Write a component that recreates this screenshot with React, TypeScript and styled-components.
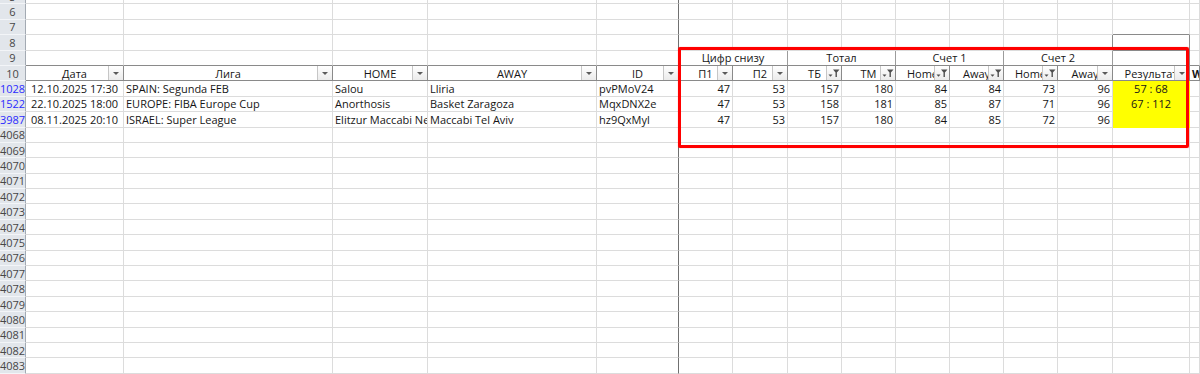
import React from 'react';
import styled, { createGlobalStyle } from 'styled-components';

const GRID = '#dcdcdc';
const DARK = '#8a8a8a';
const FREEZE = '#707070';
const YELLOW = '#ffff00';
const COLS =
  '26px 98px 209px 95px 169px 82px 54px 55px 54px 54px 54px 54px 54px 55px 77px 1fr';
const ROW_H = 15.4;
const FONT = `"Open Sans", "Liberation Sans", sans-serif`;

type Align = 'left' | 'center' | 'right';
const justify: Record<Align, string> = {
  left: 'flex-start',
  center: 'center',
  right: 'flex-end',
};

const Global = createGlobalStyle`
  html, body { margin: 0; padding: 0; background: #fff; }
  body { font-family: ${FONT}; }
`;

const Page = styled.div`
  position: relative;
  width: 1200px;
  height: 374px;
  overflow: hidden;
  background: #fff;
  font-family: ${FONT};
  font-size: 11px;
  color: #161616;
`;

const Sheet = styled.div`
  margin-top: -11px;
`;

const Row = styled.div`
  display: grid;
  grid-template-columns: ${COLS};
  height: ${ROW_H}px;
`;

const RowHead = styled.div<{ $blue?: boolean }>`
  box-sizing: border-box;
  display: flex;
  align-items: center;
  justify-content: center;
  overflow: hidden;
  white-space: nowrap;
  background: #e2e6eb;
  border-right: 1px solid #a3aab3;
  border-bottom: 1px solid #f3f5f8;
  color: ${(p) => (p.$blue ? '#2b2bff' : '#474747')};
`;

const Cell = styled.div<{
  $align?: Align;
  $fill?: string;
  $right?: string;
  $bottom?: string;
  $span?: number;
}>`
  box-sizing: border-box;
  display: flex;
  align-items: center;
  justify-content: ${(p) => justify[p.$align ?? 'left']};
  padding: 0 2px;
  overflow: hidden;
  white-space: nowrap;
  background: ${(p) => p.$fill ?? 'transparent'};
  border-right: 1px solid ${(p) => p.$right ?? GRID};
  border-bottom: 1px solid ${(p) => p.$bottom ?? GRID};
  ${(p) => (p.$span ? `grid-column: span ${p.$span};` : '')}
`;

const HeadCell = styled.div<{ $align?: Align; $bold?: boolean }>`
  position: relative;
  box-sizing: border-box;
  display: flex;
  align-items: center;
  justify-content: ${(p) => justify[p.$align ?? 'center']};
  padding: 0 2px;
  overflow: hidden;
  white-space: nowrap;
  font-weight: ${(p) => (p.$bold ? 700 : 400)};
  border-right: 1px solid ${DARK};
  border-bottom: 1px solid ${DARK};
`;

const FilterBtn = styled.span`
  position: absolute;
  top: 0;
  right: 0;
  bottom: 0;
  width: 15px;
  box-sizing: border-box;
  background: linear-gradient(#ffffff, #ebebeb);
  border-left: 1px solid #c6c6c6;
  display: flex;
  align-items: center;
  justify-content: center;
`;

const Arrow = styled.span`
  width: 0;
  height: 0;
  border-left: 3px solid transparent;
  border-right: 3px solid transparent;
  border-top: 3px solid #5a5a5a;
`;

const Highlight = styled.div`
  position: absolute;
  left: 678px;
  top: 47px;
  width: 511px;
  height: 101px;
  box-sizing: border-box;
  border: 3px solid #ff0000;
  border-radius: 2px;
  box-shadow: 0 0 1px rgba(255, 0, 0, 0.6);
  pointer-events: none;
`;

const Funnel = () => (
  <svg width="12" height="10" viewBox="0 0 12 10">
    <path d="M0.5 6.5h4l-2 2.2z" fill="#4f4f4f" />
    <path d="M5 1.5h6.5l-2.6 3v4.5h-1.4v-4.5z" fill="#4f4f4f" />
  </svg>
);

type Col = {
  head: string;
  align: Align;
  filter: 'plain' | 'funnel';
};

const columns: Col[] = [
  { head: 'Дата', align: 'center', filter: 'plain' },
  { head: 'Лига', align: 'left', filter: 'plain' },
  { head: 'HOME', align: 'left', filter: 'plain' },
  { head: 'AWAY', align: 'left', filter: 'plain' },
  { head: 'ID', align: 'left', filter: 'plain' },
  { head: 'П1', align: 'right', filter: 'plain' },
  { head: 'П2', align: 'right', filter: 'plain' },
  { head: 'ТБ', align: 'right', filter: 'funnel' },
  { head: 'ТМ', align: 'right', filter: 'funnel' },
  { head: 'Home', align: 'right', filter: 'funnel' },
  { head: 'Away', align: 'right', filter: 'funnel' },
  { head: 'Home', align: 'right', filter: 'funnel' },
  { head: 'Away', align: 'right', filter: 'plain' },
  { head: 'Результат', align: 'center', filter: 'plain' },
];

const ID_COL = 4;
const RES_COL = 13;

const data: { row: string; values: string[] }[] = [
  {
    row: '1028',
    values: ['12.10.2025 17:30', 'SPAIN: Segunda FEB', 'Salou', 'Lliria', 'pvPMoV24', '47', '53', '157', '180', '84', '84', '73', '96', '57 : 68'],
  },
  {
    row: '1522',
    values: ['22.10.2025 18:00', 'EUROPE: FIBA Europe Cup', 'Anorthosis', 'Basket Zaragoza', 'MqxDNX2e', '47', '53', '158', '181', '85', '87', '71', '96', '67 : 112'],
  },
  {
    row: '3987',
    values: ['08.11.2025 20:10', 'ISRAEL: Super League', 'Elitzur Maccabi Netanya', 'Maccabi Tel Aviv', 'hz9QxMyl', '47', '53', '157', '180', '84', '85', '72', '96', ''],
  },
];

const groups = ['Цифр снизу', 'Тотал', 'Счет 1', 'Счет 2'];

function BlankRow({ label, kind }: { label: string; kind?: 'aboveBox' | 'box' }) {
  return (
    <Row>
      <RowHead>{label}</RowHead>
      {columns.map((_, i) => {
        let right: string | undefined = i === ID_COL ? FREEZE : undefined;
        let bottom: string | undefined;
        if (kind === 'aboveBox' && i === RES_COL) bottom = DARK;
        if (kind === 'box' && (i === RES_COL - 1 || i === RES_COL)) right = DARK;
        if (kind === 'box' && i === RES_COL) bottom = DARK;
        return <Cell key={i} $right={right} $bottom={bottom} />;
      })}
      <Cell />
    </Row>
  );
}

function GroupRow() {
  return (
    <Row>
      <RowHead>9</RowHead>
      {columns.slice(0, 5).map((_, i) => (
        <Cell key={i} $bottom={DARK} $right={i === ID_COL ? FREEZE : undefined} />
      ))}
      {groups.map((g) => (
        <Cell key={g} $span={2} $align="center" $right="#9c9c9c" $bottom={DARK}>
          {g}
        </Cell>
      ))}
      <Cell $right={DARK} $bottom={DARK} />
      <Cell $bottom={DARK} />
    </Row>
  );
}

function HeaderRow() {
  return (
    <Row>
      <RowHead>10</RowHead>
      {columns.map((c, i) => (
        <HeadCell key={i}>
          {c.head}
          <FilterBtn>{c.filter === 'funnel' ? <Funnel /> : <Arrow />}</FilterBtn>
        </HeadCell>
      ))}
      <HeadCell $align="left" $bold>
        W1
      </HeadCell>
    </Row>
  );
}

function DataRow({ row, values }: { row: string; values: string[] }) {
  return (
    <Row>
      <RowHead $blue>{row}</RowHead>
      {columns.map((c, i) => {
        const isRes = i === RES_COL;
        return (
          <Cell
            key={i}
            $align={c.align}
            $fill={isRes ? YELLOW : undefined}
            $right={isRes ? YELLOW : i === ID_COL ? FREEZE : undefined}
            $bottom={isRes ? YELLOW : undefined}
          >
            {values[i]}
          </Cell>
        );
      })}
      <Cell />
    </Row>
  );
}

const tailRows = Array.from({ length: 16 }, (_, i) => String(4068 + i));

export default function App() {
  return (
    <>
      <Global />
      <Page>
        <Sheet>
          <BlankRow label="5" />
          <BlankRow label="6" />
          <BlankRow label="7" kind="aboveBox" />
          <BlankRow label="8" kind="box" />
          <GroupRow />
          <HeaderRow />
          {data.map((d) => (
            <DataRow key={d.row} row={d.row} values={d.values} />
          ))}
          {tailRows.map((r) => (
            <BlankRow key={r} label={r} />
          ))}
        </Sheet>
        <Highlight />
      </Page>
    </>
  );
}
